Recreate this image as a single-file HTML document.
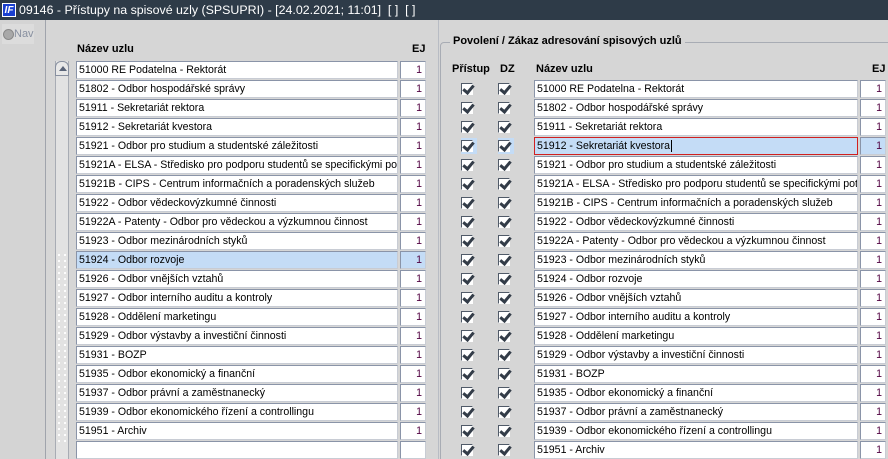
<!DOCTYPE html>
<html><head><meta charset="utf-8"><style>
*{margin:0;padding:0;box-sizing:border-box}
html,body{width:888px;height:459px;overflow:hidden}
body{background:#d6d6d6;font-family:"Liberation Sans",sans-serif;font-size:11px;color:#000;position:relative}
.title{position:absolute;left:0;top:0;width:888px;height:20px;background:#2e3b48;color:#fff;font-size:12.4px;line-height:20px;padding-left:19px}
.logo{position:absolute;left:2px;top:3px;width:14px;height:14px;background:#1a3fd0;color:#fff;font-size:10px;font-weight:bold;font-style:italic;line-height:14px;text-align:center;border:1px solid #fff}
.lp{position:absolute;left:0;top:20px;width:46px;height:439px;background:#d4d4d4;border-right:1px solid #a0a4ac}
.nav{position:absolute;left:2px;top:24px;width:32px;height:20px;background:#dcdcdc;color:#8890a0;font-size:11px;line-height:20px;padding-left:12px}
.nav:before{content:"";position:absolute;left:1px;top:5px;width:9px;height:9px;border-radius:50%;background:#a8a8a8;border:1px solid #888}
.sb{position:absolute;left:55px;top:61px;width:14px;height:398px;background:#e2e2e2;border-left:1px solid #a8acb4;border-right:1px solid #a8acb4}
.up{position:absolute;left:55px;top:61px;width:14px;height:15px;background:#e8e8e8;border:1px solid #8890a0;border-radius:6px 6px 0 0}
.up:after{content:"";position:absolute;left:3px;top:4px;border-left:4px solid transparent;border-right:4px solid transparent;border-bottom:5px solid #5a6478}
.f{position:absolute;height:18px;background:#fff;border:1px solid #8a94a8;border-right-color:#c8ccd4;border-bottom-color:#c8ccd4;line-height:16px;padding-left:2px;white-space:nowrap;overflow:hidden;font-size:10.6px}
.e{text-align:right;padding-right:3px;color:#500040}
.sel{background:#c4dcf6}
.h{position:absolute;font-weight:bold;font-size:11px}
.cb{position:absolute;width:12px;height:12px;background:#fff;border-top:1px solid #505a68;border-left:1px solid #505a68;border-right:1px solid #fff;border-bottom:1px solid #fff}
.cb:after{content:"";position:absolute;left:3px;top:-1px;width:4px;height:8px;border-right:3px solid #333c48;border-bottom:3px solid #333c48;transform:rotate(40deg)}
.grp{position:absolute;left:440px;top:42px;width:460px;height:430px;border:1px solid #a8acb4;border-radius:4px}
.gt{position:absolute;left:450px;top:35px;background:#d6d6d6;padding:0 3px;font-weight:bold;font-size:11px}
.vl{position:absolute;left:438px;top:20px;width:1px;height:439px;background:#b8bcc4}
.dots{position:absolute;left:56px;top:252px;width:12px;height:190px;background-image:radial-gradient(circle,#fff 1px,transparent 1.2px);background-size:6px 6px}
</style></head><body>
<div class="title"><div class="logo">IF</div>09146 - Přístupy na spisové uzly (SPSUPRI) - [24.02.2021; 11:01] &nbsp;[ ] &nbsp;[ ]</div>
<div class="lp"></div>
<div class="nav">Nav</div>
<div class="h" style="left:77px;top:43px">Název uzlu</div>
<div class="h" style="left:412px;top:43px">EJ</div>
<div class="sb"></div><div class="up"></div><div class="dots"></div>
<div class="vl"></div>
<div class="grp"></div>
<div class="gt">Povolení / Zákaz adresování spisových uzlů</div>
<div class="h" style="left:452px;top:63px">Přístup</div>
<div class="h" style="left:500px;top:63px">DZ</div>
<div class="h" style="left:536px;top:63px">Název uzlu</div>
<div class="h" style="left:872px;top:63px">EJ</div>
<div id="rows"></div>
<script>
var L=["51000 RE Podatelna - Rektorát","51802 - Odbor hospodářské správy","51911 - Sekretariát rektora","51912 - Sekretariát kvestora","51921 - Odbor pro studium a studentské záležitosti","51921A - ELSA - Středisko pro podporu studentů se specifickými potřebami","51921B - CIPS - Centrum informačních a poradenských služeb","51922 - Odbor vědeckovýzkumné činnosti","51922A - Patenty - Odbor pro vědeckou a výzkumnou činnost","51923 - Odbor mezinárodních styků","51924 - Odbor rozvoje","51926 - Odbor vnějších vztahů","51927 - Odbor interního auditu a kontroly","51928 - Oddělení marketingu","51929 - Odbor výstavby a investiční činnosti","51931 - BOZP","51935 - Odbor ekonomický a finanční","51937 - Odbor právní a zaměstnanecký","51939 - Odbor ekonomického řízení a controllingu","51951 - Archiv"];
var h="";
for(var i=0;i<21;i++){var y=61+i*19,t=L[i]||"",s=i==10?" sel":"";
h+='<div class="f'+s+'" style="left:76px;top:'+y+'px;width:322px">'+t+'</div><div class="f e'+s+'" style="left:400px;top:'+y+'px;width:26px">'+(t?"1":"")+'</div>';}
for(var i=0;i<20;i++){var y=80+i*19,s=i==3?" sel":"";
if(i==3)h+='<div style="position:absolute;left:461px;top:'+(y+1)+'px;width:16px;height:16px;background:#c4dcf6"></div><div style="position:absolute;left:498px;top:'+(y+1)+'px;width:16px;height:16px;background:#c4dcf6"></div>';
h+='<div class="cb" style="left:461px;top:'+(y+3)+'px"></div><div class="cb" style="left:498px;top:'+(y+3)+'px"></div>';
h+='<div class="f'+s+'" style="left:534px;top:'+y+'px;width:324px'+(i==3?';border:1px solid #d02020':'')+'">'+L[i]+(i==3?'<span style="border-left:1px solid #000;margin-left:1px"></span>':'')+'</div><div class="f e'+s+'" style="left:860px;top:'+y+'px;width:26px">1</div>';}
document.getElementById("rows").innerHTML=h;
</script>
</body></html>
